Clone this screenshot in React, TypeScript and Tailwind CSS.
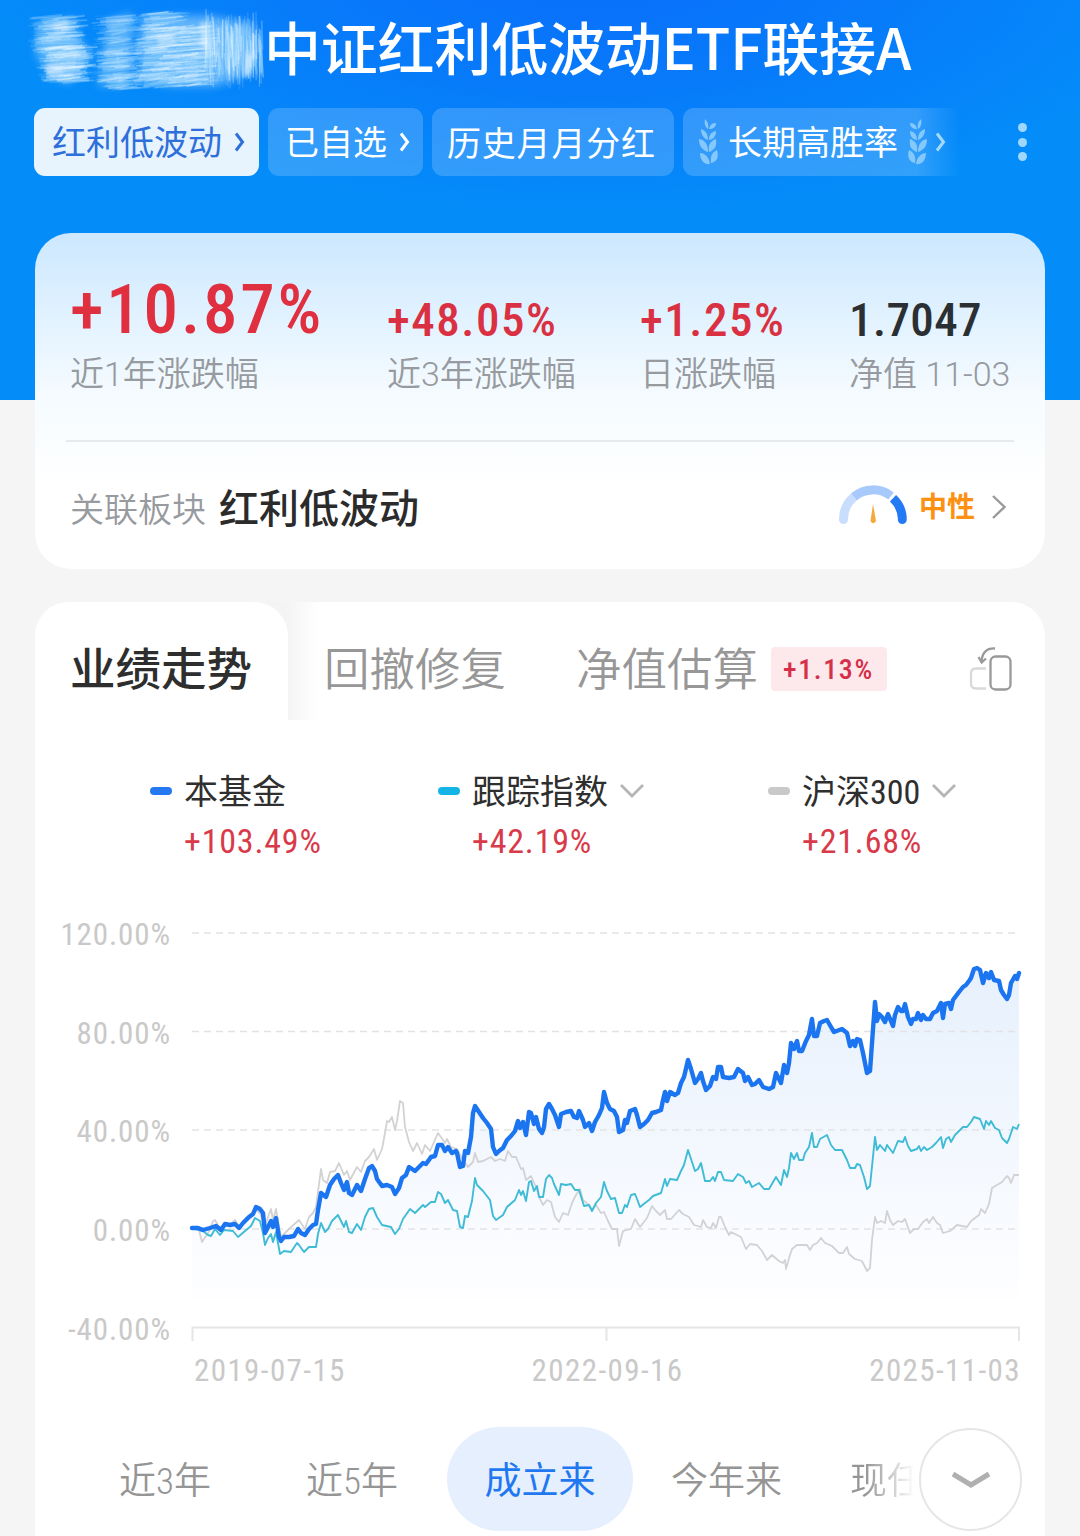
import { clsx } from "clsx";

const FUND =
  "192,1228 198,1228 203,1230 210,1228 216,1226 221,1230 225,1224 230,1225 235,1224 239,1228 243,1223 249,1217 253,1214 256,1207 260,1209 263,1213 265,1233 268,1227 271,1221 273,1227 276,1218 279,1237 281,1241 284,1237 289,1237 294,1236 298,1229 301,1233 305,1235 309,1229 313,1225 316,1224 318,1210 321,1193 326,1197 330,1185 334,1179 338,1175 341,1183 344,1190 347,1182 349,1193 352,1195 357,1185 361,1191 365,1179 369,1168 372,1166 375,1171 377,1179 382,1186 387,1185 392,1187 395,1194 399,1188 402,1178 406,1175 409,1167 415,1171 419,1167 423,1163 426,1164 431,1157 435,1156 438,1145 442,1145 445,1151 448,1147 452,1153 456,1151 457,1153 460,1167 463,1166 465,1151 468,1153 471,1137 473,1113 475,1106 479,1112 483,1118 487,1123 491,1129 493,1147 496,1154 499,1151 503,1148 507,1140 511,1136 515,1131 518,1121 520,1128 523,1122 526,1135 529,1112 531,1113 534,1124 536,1117 539,1129 542,1133 544,1127 546,1109 549,1104 552,1109 555,1115 559,1127 561,1114 566,1112 571,1111 574,1117 577,1118 579,1111 583,1120 585,1127 589,1123 592,1131 595,1122 599,1115 602,1108 604,1092 607,1103 610,1109 614,1111 617,1117 619,1132 623,1130 625,1120 627,1123 630,1111 635,1109 637,1115 640,1127 644,1124 648,1120 652,1113 656,1112 661,1110 663,1100 665,1092 667,1101 670,1092 675,1095 678,1093 681,1083 684,1077 688,1060 691,1069 695,1083 698,1079 701,1073 703,1081 706,1090 710,1086 713,1077 716,1079 718,1067 721,1067 723,1077 729,1078 734,1077 738,1069 743,1073 745,1081 748,1077 752,1085 755,1084 759,1080 763,1087 769,1089 773,1087 776,1073 779,1079 781,1083 784,1065 787,1073 789,1063 791,1043 794,1049 797,1041 799,1051 802,1051 806,1041 809,1035 812,1019 814,1036 817,1036 820,1023 824,1021 827,1020 831,1027 834,1032 842,1029 847,1033 850,1046 853,1041 855,1046 857,1039 860,1040 863,1053 867,1073 870,1071 872,1043 875,1002 877,1021 879,1014 882,1017 885,1022 888,1014 893,1026 895,1015 898,1007 901,1011 903,1011 905,1004 908,1017 911,1024 913,1019 916,1019 918,1013 921,1020 923,1015 926,1019 930,1019 933,1013 937,1011 941,1003 943,1018 945,1004 949,1003 951,1009 953,1000 959,992 963,987 966,985 969,981 971,978 974,969 977,968 980,970 983,983 986,973 989,978 991,972 994,980 999,981 1001,990 1004,995 1007,999 1009,995 1011,983 1015,976 1017,979 1019,973";

const INDEX =
  "192,1228 203,1231 208,1235 211,1236 215,1229 220,1235 224,1230 233,1231 238,1237 245,1231 251,1226 255,1218 260,1221 263,1233 265,1245 268,1238 271,1234 273,1242 276,1232 280,1254 284,1251 291,1252 297,1243 299,1245 304,1252 309,1247 316,1247 318,1234 321,1223 325,1232 328,1229 332,1221 338,1215 344,1227 346,1221 349,1232 352,1233 357,1224 361,1230 365,1217 369,1209 373,1208 377,1217 382,1225 391,1227 395,1234 399,1229 403,1219 410,1209 415,1213 423,1205 425,1207 431,1202 435,1202 438,1192 441,1194 445,1203 448,1200 453,1210 457,1211 460,1227 463,1228 465,1216 468,1217 472,1201 475,1178 477,1185 483,1191 490,1200 493,1216 496,1220 503,1215 507,1207 515,1200 519,1190 521,1195 523,1191 526,1201 529,1182 531,1181 534,1191 537,1186 539,1197 543,1197 546,1179 549,1175 552,1178 554,1184 559,1195 561,1184 566,1185 571,1184 575,1190 579,1190 584,1206 589,1205 592,1211 596,1203 601,1197 604,1182 607,1191 611,1199 615,1198 619,1213 622,1213 625,1205 627,1207 631,1195 635,1194 637,1199 640,1207 645,1203 649,1200 653,1196 661,1193 665,1179 667,1186 670,1179 677,1180 681,1171 684,1165 688,1150 691,1159 695,1171 698,1169 701,1163 703,1172 705,1181 710,1181 713,1177 715,1181 718,1172 721,1172 724,1180 733,1181 738,1174 743,1177 746,1183 749,1181 752,1187 759,1183 764,1189 769,1189 776,1177 781,1185 784,1170 787,1177 789,1168 791,1153 794,1159 797,1153 799,1160 803,1160 805,1153 809,1147 812,1133 814,1147 817,1147 820,1139 827,1135 831,1145 835,1150 842,1150 847,1160 850,1168 855,1168 857,1164 860,1165 864,1177 867,1189 870,1186 875,1137 877,1150 880,1145 885,1151 887,1145 893,1153 898,1141 903,1142 905,1137 908,1146 911,1151 917,1149 919,1146 921,1151 924,1147 927,1150 932,1147 936,1143 941,1137 943,1148 946,1139 949,1137 951,1142 955,1135 963,1127 967,1127 971,1122 974,1117 980,1119 984,1129 986,1121 989,1125 991,1121 995,1128 999,1130 1002,1138 1007,1143 1009,1139 1013,1127 1017,1129 1019,1124";

const CSI300 =
  "192,1228 199,1230 202,1242 210,1230 213,1221 215,1220 221,1231 225,1225 230,1225 235,1220 239,1227 247,1220 256,1210 260,1213 265,1227 268,1217 271,1209 273,1220 276,1209 279,1227 281,1237 290,1228 299,1220 305,1229 309,1217 313,1213 316,1207 321,1169 323,1180 327,1183 330,1172 335,1171 339,1163 344,1175 347,1171 350,1180 357,1167 361,1172 365,1161 369,1157 374,1149 377,1160 382,1149 385,1133 387,1121 389,1122 392,1117 395,1130 397,1121 400,1101 403,1103 405,1127 409,1142 413,1151 417,1143 422,1154 425,1145 430,1151 434,1142 438,1133 445,1143 447,1139 451,1147 457,1149 463,1160 468,1167 473,1162 475,1153 478,1162 483,1161 491,1157 495,1161 500,1159 505,1161 508,1151 512,1157 516,1157 521,1169 523,1168 526,1180 531,1176 536,1187 540,1199 543,1205 547,1200 551,1202 555,1217 559,1222 563,1213 568,1215 572,1203 576,1195 580,1189 583,1200 589,1205 592,1210 596,1205 601,1213 604,1212 608,1221 612,1229 617,1229 619,1246 623,1231 631,1229 635,1219 640,1227 647,1218 652,1206 656,1211 660,1215 665,1210 667,1219 671,1219 679,1210 683,1214 689,1217 694,1225 701,1227 703,1220 707,1227 711,1228 713,1223 716,1228 719,1217 721,1217 725,1227 729,1235 731,1232 737,1235 741,1237 746,1249 750,1244 757,1245 762,1251 767,1260 772,1255 779,1261 783,1263 785,1260 786,1269 789,1258 792,1249 797,1245 807,1245 810,1250 813,1245 817,1243 821,1238 825,1243 832,1246 839,1253 843,1253 847,1247 849,1254 855,1259 862,1261 867,1271 870,1268 872,1240 875,1217 877,1223 881,1221 885,1223 887,1211 890,1220 893,1225 898,1221 902,1222 905,1219 910,1233 914,1229 918,1229 923,1222 927,1219 929,1223 933,1217 937,1223 940,1225 943,1233 950,1231 957,1225 967,1227 971,1221 979,1215 981,1209 985,1213 989,1204 992,1188 997,1185 1002,1182 1007,1176 1009,1178 1011,1183 1014,1175 1019,1175";

const Y_TICKS = ["120.00%", "80.00%", "40.00%", "0.00%", "-40.00%"];
const GRID_LINES = [933, 1031.5, 1130, 1229];

// Deterministic noise so the brushed-out name looks the same on every render.
function noise(n: number) {
  const v = Math.sin(n * 127.1 + 11.7) * 43758.5453;
  return v - Math.floor(v);
}

const BLOBS = [
  { x: 58, y: 30, w: 42, h: 36, n: 160, o: 0.08 },
  { x: 68, y: 60, w: 42, h: 36, n: 170, o: 0.12 },
  { x: 120, y: 48, w: 40, h: 74, n: 240, o: 0.08 },
  { x: 162, y: 46, w: 42, h: 74, n: 300, o: 0.12 },
  { x: 192, y: 52, w: 42, h: 60, n: 250, o: 0.12 },
];

function BrushedName() {
  return (
    <svg className="h-[90px] w-[268px] shrink-0" viewBox="0 0 268 90" fill="none">
      <g className="blur-[4px]">
        <path d="M38 20 74 14 82 40 94 48 86 62 68 80 50 70 36 52Z" fill="#8fd0fb" opacity=".55" />
        <path d="M108 16 132 8 130 40 124 82 98 82 102 50Z" fill="#8fd0fb" opacity=".5" />
        <path d="M142 14 172 12 210 12 254 20 256 66 216 82 170 82 140 74Z" fill="#9fd7fb" opacity=".6" />
      </g>
      <g className="blur-[0.5px]">
        {BLOBS.map((b, i) =>
          Array.from({ length: b.n }, (_, k) => {
            const s = i * 997 + k * 7;
            const len = b.w * (0.3 + noise(s) * 0.65);
            const cx = b.x + (noise(s + 1) - 0.5) * b.w * 0.6;
            const cy = b.y + (noise(s + 2) - 0.5) * b.h;
            const tilt = 0.4 + noise(s + 3) * 1.6;
            return (
              <path
                key={`${i}-${k}`}
                d={`M${cx - len / 2} ${cy + tilt}L${cx + len / 2} ${cy - tilt}`}
                stroke={noise(s + 4) > 0.5 ? "#e4f5fe" : "#6fc0fa"}
                strokeWidth={0.8 + noise(s + 5) * 1.6}
                opacity={b.o + noise(s + 6) * 0.24}
              />
            );
          }),
        )}
        {Array.from({ length: 240 }, (_, k) => {
          const s = 9001 + k * 7;
          const x = 206 + noise(s) * 56;
          const cy = 46 + (noise(s + 1) - 0.5) * 34;
          const len = 14 + noise(s + 2) * 34;
          return (
            <path
              key={k}
              d={`M${x} ${cy - len / 2}L${x - 1 + noise(s + 3) * 3} ${cy + len / 2}`}
              stroke={noise(s + 4) > 0.5 ? "#dff3ff" : "#86ccfa"}
              strokeWidth={0.8 + noise(s + 5)}
              opacity={0.15 + noise(s + 6) * 0.3}
            />
          );
        })}
      </g>
      <g className="blur-[2px]" stroke="#f4fbff">
        <path d="M203 18 205 46M250 50 247 72" strokeWidth="6" opacity=".55" />
        <path d="M54 24 68 20M46 66 62 64M158 38 174 34" strokeWidth="11" opacity=".4" />
      </g>
    </svg>
  );
}

function Arrow({ className }: { className?: string }) {
  return (
    <svg className={clsx("h-[20px] w-[12px]", className)} viewBox="0 0 12 20" fill="none" stroke="currentColor">
      <path d="M2 1.5 8.5 10 2 18.5" strokeWidth="3" />
    </svg>
  );
}

function Laurel({ className }: { className?: string }) {
  return (
    <svg className={clsx("h-[46px] w-[20px]", className)} viewBox="0 0 20 46" fill="#84c8fc">
      <path d="M6 0C9 3 10 6 9 10 6 8 5 4 6 0ZM17 4C17 8 14 10 10 10 11 6 13 4 17 4Z" />
      <path d="M2 10C7 12 9 15 9 21 4 19 2 15 2 10ZM17 12C17 17 15 20 10 21 10 16 12 13 17 12Z" />
      <path d="M0 20C6 21 9 25 9 33 3 31 0 27 0 20ZM17 20C18 27 16 31 10 33 9 26 11 22 17 20Z" />
      <path d="M1 34C6 34 10 38 11 45 5 46 1 41 1 34ZM18 31C20 38 18 43 12 44 11 38 13 33 18 31Z" />
    </svg>
  );
}

function Caret() {
  return (
    <svg className="h-[16px] w-[26px]" viewBox="0 0 26 16" fill="none" stroke="#b5b5b5" strokeWidth="2.8">
      <path d="M2 2 13 13 24 2" />
    </svg>
  );
}

function Gauge() {
  return (
    <svg className="-mt-[11px] h-[40px] w-[70px]" viewBox="0 0 70 40" fill="none" strokeWidth="9">
      <path d="M5.500 34.500A29.500 29.500 0 0 1 16.500 11.400" stroke="#c9ddfd" strokeLinecap="round" />
      <path d="M16 11.800A29.500 29.500 0 0 1 53 11" stroke="#a8c9fb" />
      <path d="M55 13.200A29.500 29.500 0 0 1 64.300 33" stroke="#2479f5" />
      <circle cx="64.300" cy="34.500" r="4.500" fill="#2479f5" />
      <path d="M35 19 38 36Q35 40.500 32.500 36Z" fill="#f5a93a" />
    </svg>
  );
}

function Header() {
  return (
    <header className="h-[400px] bg-[#048df9] bg-[radial-gradient(ellipse_620px_260px_at_590px_-40px,#0a6dfb_0%,#077bfa_50%,#048df9_100%)]">
      <div className="flex h-[98px] items-center">
        <BrushedName />
        <h1 className="-mt-[9px] -ml-[4px] font-['Noto_Sans_CJK_SC',sans-serif] text-[57px] font-medium leading-[90px] tracking-[-0.2px] whitespace-nowrap text-white">
          中证红利低波动ETF联接A
        </h1>
      </div>
      <div className="mt-[10px] flex h-[68px] pl-[34px] text-[34px] leading-[73px] whitespace-nowrap text-white">
        <div className="flex w-[225px] items-center gap-[12px] rounded-[11px] bg-[#e7f3fd] pl-[18px] text-[#2d6fdb]">
          <span className="mt-[3px]">红利低波动</span>
          <Arrow />
        </div>
        <div className="ml-[9px] flex w-[155px] items-center gap-[12px] rounded-[11px] bg-white/18 pl-[17px]">
          <span className="mt-[3px]">已自选</span>
          <Arrow />
        </div>
        <div className="ml-[9px] w-[242px] rounded-[11px] bg-white/18 pl-[15px] tracking-[0.8px]">历史月月分红</div>
        <div className="ml-[9px] flex w-[285px] items-center rounded-l-[11px] bg-linear-to-r from-white/18 from-82% to-transparent to-97% pl-[16px]">
          <Laurel />
          <span className="mt-[3px] ml-[9px]">长期高胜率</span>
          <Laurel className="ml-[9px] -scale-x-100" />
          <Arrow className="ml-[8px] text-[#a5d8fd]" />
        </div>
        <div className="ml-[50px] flex w-[9px] flex-col justify-center gap-[5.5px]">
          <i className="size-[9px] rounded-full bg-[#9fd8fe]" />
          <i className="size-[9px] rounded-full bg-[#9fd8fe]" />
          <i className="size-[9px] rounded-full bg-[#9fd8fe]" />
        </div>
      </div>
    </header>
  );
}

interface StatProps {
  value: string;
  label: string;
  className: string;
  valueClass?: string;
}

function Stat({ value, label, className, valueClass }: StatProps) {
  return (
    <div className={clsx("shrink-0", className)}>
      <div className={clsx("flex h-[78px] items-end font-medium whitespace-nowrap", valueClass)}>{value}</div>
      <div className="mt-[5px] text-[34px] leading-[40px] font-[350] font-stretch-normal whitespace-nowrap text-[#979a9e]">
        {label}
      </div>
    </div>
  );
}

function SummaryCard() {
  return (
    <section className="mx-[35px] -mt-[167px] h-[336px] rounded-[36px] bg-linear-to-b from-[#cce8ff] via-[#f5fbff] via-48% to-white to-75% pt-[38px] pl-[35px]">
      <div className="flex h-[169px]">
        <Stat
          className="w-[317px]"
          value="+10.87%"
          label="近1年涨跌幅"
          valueClass="text-[69px] leading-[78px] tracking-[2.8px] text-[#e02f3e]"
        />
        <Stat
          className="w-[253px]"
          value="+48.05%"
          label="近3年涨跌幅"
          valueClass="text-[47px] leading-[58px] tracking-[1.5px] text-[#da3142]"
        />
        <Stat
          className="w-[209px]"
          value="+1.25%"
          label="日涨跌幅"
          valueClass="text-[47px] leading-[58px] tracking-[1.5px] text-[#da3142]"
        />
        <Stat
          className=""
          value="1.7047"
          label="净值 11-03"
          valueClass="text-[47px] leading-[58px] tracking-[0.4px] text-[#2b2f33]"
        />
      </div>
      <div className="-ml-1 h-[2px] w-[948px] bg-[#e6eaed]" />
      <div className="flex h-[126px] items-center pt-[10px] whitespace-nowrap">
        <span className="text-[34px] font-[350] text-[#979a9e]">关联板块</span>
        <span className="ml-[13px] text-[40px] font-medium text-[#2b2b2b]">红利低波动</span>
        <div className="mr-[38px] ml-auto flex items-center">
          <Gauge />
          <span className="-mt-[4px] ml-[11px] text-[28px] font-bold text-[#fb9013]">中性</span>
          <svg className="-mt-[7px] ml-[16px] h-[26px] w-[16px]" viewBox="0 0 16 26" fill="none" stroke="#999" strokeWidth="2.4">
            <path d="M2 2 13.500 13 2 24" />
          </svg>
        </div>
      </div>
    </section>
  );
}

interface LegendProps {
  name: string;
  value: string;
  mark: string;
  className: string;
  caret?: boolean;
}

function Legend({ name, value, mark, className, caret }: LegendProps) {
  return (
    <div className={clsx("shrink-0", className)}>
      <div className="flex h-[50px] items-center whitespace-nowrap">
        <i className={clsx("mr-[12px] h-[8px] w-[22px] rounded-[4px]", mark)} />
        <span className="mt-[2px] mr-[11px] text-[34px] leading-[50px] text-[#2f2f2f]">{name}</span>
        {caret && <Caret />}
      </div>
      <div className="ml-[34px] h-[50px] text-[34px] leading-[50px] tracking-[0.8px] text-[#d93a4a]">{value}</div>
    </div>
  );
}

function Chart() {
  return (
    <div className="flex h-[425px]">
      <div className="-mt-[34px] flex w-[136px] shrink-0 flex-col text-right text-[31px] leading-[98.7px] tracking-[0.9px] text-[#c9c9c9]">
        {Y_TICKS.map((t) => (
          <span key={t}>{t}</span>
        ))}
      </div>
      <svg className="ml-[14px] h-[425px] w-[840px]" viewBox="185 920 840 425" fill="none">
        <defs>
          <linearGradient id="area" gradientUnits="userSpaceOnUse" x1="0" y1="968" x2="0" y2="1300">
            <stop offset="0" stopColor="#e6f0fc" />
            <stop offset=".5" stopColor="#f2f7fe" />
            <stop offset="1" stopColor="#fefeff" />
          </linearGradient>
        </defs>
        <polygon points={`192,1300 ${FUND} 1019,1300`} fill="url(#area)" />
        {GRID_LINES.map((y) => (
          <path key={y} d={`M192 ${y}H1020`} stroke="#e3e3e6" strokeWidth="1.6" strokeDasharray="7 5" />
        ))}
        <path d="M192.500 1341V1327.500H1019V1341M606.500 1327.500V1341" stroke="#e6e6e6" strokeWidth="2" />
        <polyline points={CSI300} stroke="#d2d2d4" strokeWidth="1.8" strokeLinejoin="round" />
        <polyline points={INDEX} stroke="#3fbbd6" strokeWidth="1.9" strokeLinejoin="round" />
        <polyline points={FUND} stroke="#1b74f0" strokeWidth="4.4" strokeLinejoin="round" strokeLinecap="round" />
      </svg>
    </div>
  );
}

function RotateIcon() {
  return (
    <svg className="h-[46px] w-[44px]" viewBox="0 0 44 46" fill="none" strokeWidth="2.3">
      <path d="M17 42.500H7Q2 42.500 2 37.500V27.500Q2 22.500 7 22.500H17" stroke="#d9d9d9" />
      <rect x="21.500" y="10.500" width="20" height="33" rx="5" stroke="#999" />
      <path d="M26 2.500C18 2 13.500 6 12.500 15" stroke="#999" />
      <path d="M9.500 11 12.700 16.500 17 12.500" stroke="#999" />
    </svg>
  );
}

function PerformanceCard() {
  return (
    <section className="mx-[35px] mt-[33px] h-[934px] rounded-t-[34px] bg-white">
      <div className="flex h-[134px] items-center pt-[4px] whitespace-nowrap">
        {/* the raised tab sits on a soft grey notch that fades into the flat ones */}
        <div className="-mt-[4px] h-[118px] w-[289px] self-start rounded-tl-[34px] bg-linear-to-r from-[#f4f4f4] from-87% to-white to-98%">
          <div className="h-[118px] w-[253px] rounded-t-[34px] bg-white pl-[35px] text-[45.500px] leading-[137px] font-medium text-[#2e2e2e]">
            业绩走势
          </div>
        </div>
        <div className="text-[45.500px] font-[350] text-[#979797]">回撤修复</div>
        <div className="ml-[70px] text-[45.500px] font-[350] text-[#979797]">净值估算</div>
        <div className="-mt-[4px] ml-[13px] h-[44px] w-[116px] rounded-[4px] bg-[#fde9eb] pl-[12px] text-[28px] leading-[45px] font-medium tracking-[1.6px] text-[#d5304a]">
          +1.13%
        </div>
        <div className="-mt-[4px] mr-[32px] ml-auto">
          <RotateIcon />
        </div>
      </div>
      <div className="mt-[30px] flex h-[100px] pl-[115px]">
        <Legend className="w-[288px]" name="本基金" value="+103.49%" mark="bg-[#2478f0]" />
        <Legend className="w-[330px]" name="跟踪指数" value="+42.19%" mark="bg-[#14b5e6]" caret />
        <Legend className="" name="沪深300" value="+21.68%" mark="bg-[#c9c9c9]" caret />
      </div>
      <div className="mt-[54px]">
        <Chart />
      </div>
      <div className="mt-px mr-[24px] ml-[159px] flex h-[50px] justify-between text-[31px] leading-[50px] tracking-[1.4px] text-[#c9c9c9]">
        <span>2019-07-15</span>
        <span>2022-09-16</span>
        <span>2025-11-03</span>
      </div>
      <div className="mt-[31px] flex h-[104px] text-[37px] leading-[110px] font-[350] whitespace-nowrap text-[#959595]">
        <span className="ml-[84px] w-[187px]">近3年</span>
        <span className="w-[141px]">近5年</span>
        <span className="w-[186px] rounded-full bg-[#e6effe] text-center font-normal text-[#1f78f0]">成立来</span>
        <span className="ml-[38px] w-[179px]">今年来</span>
        <span className="-mr-[6px] w-[76px] bg-linear-to-r from-[#959595] from-20% to-white to-85% bg-clip-text text-transparent">
          现任
        </span>
        <div className="relative mt-px -ml-px flex size-[103px] items-center justify-center rounded-full border-2 border-[#e6e6e6] bg-white">
          <svg className="h-[20px] w-[40px]" viewBox="0 0 40 20" fill="none" stroke="#b0b0b0" strokeWidth="5">
            <path d="M2 4 20 15 38 4" />
          </svg>
        </div>
      </div>
    </section>
  );
}

export default function App() {
  return (
    <div className="h-[1536px] w-[1080px] overflow-hidden bg-[#f5f5f5] font-[Roboto,'Noto_Sans_CJK_SC',sans-serif] font-stretch-semi-condensed">
      <Header />
      <SummaryCard />
      <PerformanceCard />
    </div>
  );
}
